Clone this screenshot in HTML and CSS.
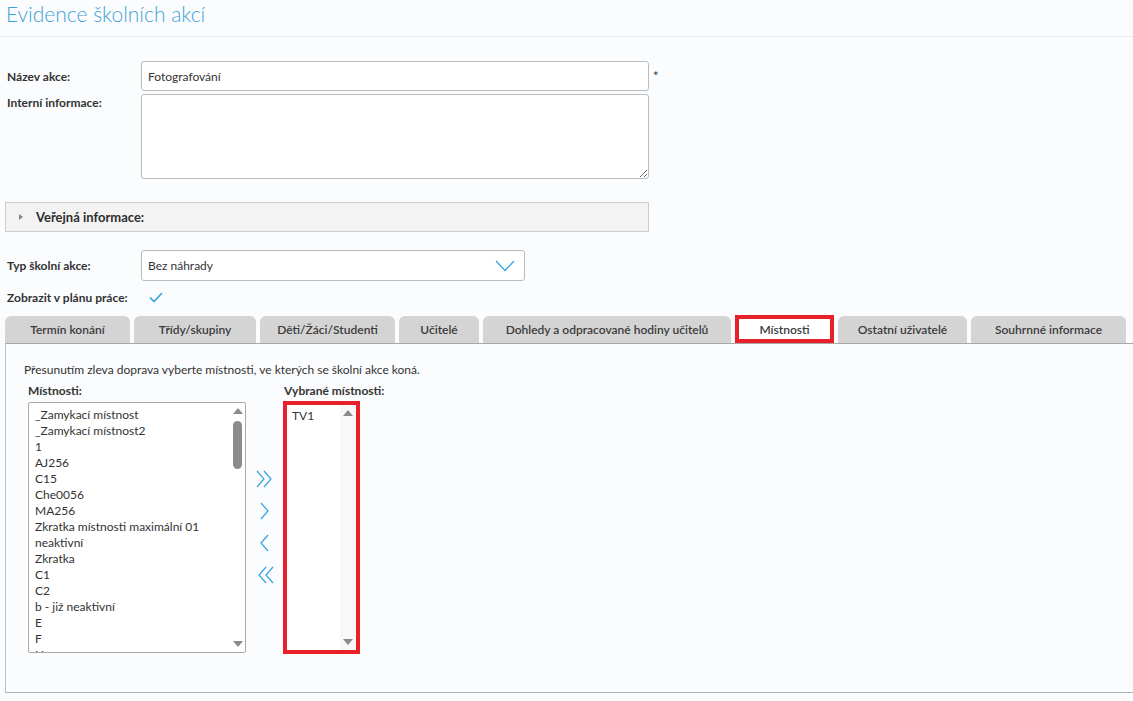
FILE: index.html
```html
<!DOCTYPE html>
<html lang="cs">
<head>
    <meta charset="UTF-8">
    <meta name="viewport" content="width=device-width, initial-scale=1.0">
    <title>Evidence školních akcí</title>
    <link rel="stylesheet" href="styles.css">
</head>
<body>
    <!-- Page header -->
    <header class="page-head">
        <h1>Evidence školních akcí</h1>
    </header>

    <!-- Basic event data -->
    <div class="form-grid">
        <label class="form-label" for="nazev">Název akce:</label>
        <input class="text-input" id="nazev" type="text" value="Fotografování">
        <span class="required">*</span>

        <label class="form-label top" for="interni">Interní informace:</label>
        <textarea class="text-area" id="interni"></textarea>
        <span></span>
    </div>

    <div class="collapse-head">
        <span class="collapse-arrow"></span>
        Veřejná informace:
    </div>

    <div class="form-grid second">
        <label class="form-label">Typ školní akce:</label>
        <div class="select-box">
            <span>Bez náhrady</span>
            <svg class="select-chevron" width="20" height="12" viewBox="0 0 20 12">
                <path d="M1 1 L10 10.5 L19 1" fill="none" stroke="#35a4df" stroke-width="1.3"/>
            </svg>
        </div>
        <span></span>

        <label class="form-label">Zobrazit v plánu práce:</label>
        <div class="check-cell">
            <svg width="14" height="11" viewBox="0 0 14 11">
                <path d="M1 5.5 L5 9.5 L13 1" fill="none" stroke="#35a4df" stroke-width="1.6"/>
            </svg>
        </div>
        <span></span>
    </div>

    <!-- Tabs -->
    <ul class="tabs">
        <li class="tab t1">Termín konání</li>
        <li class="tab t2">Třídy/skupiny</li>
        <li class="tab t3">Děti/Žáci/Studenti</li>
        <li class="tab t4">Učitelé</li>
        <li class="tab t5">Dohledy a odpracované hodiny učitelů</li>
        <li class="tab t6 is-active">Místnosti</li>
        <li class="tab t7">Ostatní uživatelé</li>
        <li class="tab t8">Souhrnné informace</li>
    </ul>

    <div class="tab-panel">
        <p class="hint">Přesunutím zleva doprava vyberte místnosti, ve kterých se školní akce koná.</p>

        <div class="picker">
            <div class="picker-col">
                <div class="picker-label">Místnosti:</div>
                <div class="listbox wide">
                    <ul class="options">
                        <li>_Zamykací místnost</li>
                        <li>_Zamykací místnost2</li>
                        <li>1</li>
                        <li>AJ256</li>
                        <li>C15</li>
                        <li>Che0056</li>
                        <li>MA256</li>
                        <li>Zkratka místnosti maximální 01</li>
                        <li>neaktivní</li>
                        <li>Zkratka</li>
                        <li>C1</li>
                        <li>C2</li>
                        <li>b - již neaktivní</li>
                        <li>E</li>
                        <li>F</li>
                        <li>H</li>
                    </ul>
                    <div class="scrollbar">
                        <span class="arrow-up"></span>
                        <span class="thumb"></span>
                        <span class="arrow-down"></span>
                    </div>
                </div>
            </div>

            <div class="move-buttons">
                <svg width="20" height="18" viewBox="0 0 20 18"><path d="M2 1 L9 9 L2 17 M9 1 L16 9 L9 17" fill="none" stroke="#35a4df" stroke-width="1.2"/></svg>
                <svg width="20" height="18" viewBox="0 0 20 18"><path d="M6 1 L13 9 L6 17" fill="none" stroke="#35a4df" stroke-width="1.2"/></svg>
                <svg width="20" height="18" viewBox="0 0 20 18"><path d="M13 1 L6 9 L13 17" fill="none" stroke="#35a4df" stroke-width="1.2"/></svg>
                <svg width="20" height="18" viewBox="0 0 20 18"><path d="M11 1 L4 9 L11 17 M18 1 L11 9 L18 17" fill="none" stroke="#35a4df" stroke-width="1.2"/></svg>
            </div>

            <div class="picker-col">
                <div class="picker-label">Vybrané místnosti:</div>
                <div class="listbox narrow marked">
                    <ul class="options">
                        <li>TV1</li>
                    </ul>
                    <div class="scrollbar light">
                        <span class="arrow-up"></span>
                        <span class="arrow-down"></span>
                    </div>
                </div>
            </div>
        </div>
    </div>
</body>
</html>
```

FILE: styles.css
```css
body {
    margin: 0;
    background: #fbfcfd;
    font-family: Lato, "Open Sans", sans-serif;
    font-size: 12px;
    color: #333;
}
.page-head {
    height: 36px;
    border-bottom: 1px solid #e4eaee;
    padding-left: 6px;
}
.page-head h1 {
    margin: 0;
    font-size: 21px;
    font-weight: 300;
    line-height: 28px;
    color: #3ea3d9;
}

/* label / field grid */
.form-grid {
    display: grid;
    grid-template-columns: 134px 508px auto;
    row-gap: 3px;
    padding: 24px 0 0 7px;
    align-items: center;
}
.form-grid.second {
    padding-top: 18px;
    row-gap: 6px;
}
.form-label {
    font-weight: 700;
    color: #333;
}
.form-label.top {
    align-self: start;
    padding-top: 1px;
}
.required {
    padding-left: 4px;
    align-self: start;
    padding-top: 7px;
    font-size: 13px;
}
.text-input,
.text-area,
.select-box {
    box-sizing: border-box;
    border: 1px solid #b9bcbe;
    border-radius: 3px;
    background: #fff;
    font-family: inherit;
    font-size: 12px;
    color: #333;
    width: 508px;
}
.text-input {
    height: 30px;
    padding: 0 6px;
}
.text-area {
    height: 85px;
    resize: vertical;
    margin: 0;
    display: block;
}
.select-box {
    width: 384px;
    height: 31px;
    padding: 0 6px;
    display: flex;
    align-items: center;
    justify-content: space-between;
}
.select-chevron {
    margin-right: 3px;
}
.check-cell {
    height: 20px;
    padding-left: 8px;
    display: flex;
    align-items: center;
}

.collapse-head {
    box-sizing: border-box;
    margin: 23px 0 0 5px;
    width: 644px;
    height: 30px;
    background: #f3f3f3;
    border: 1px solid #cdcdcd;
    display: flex;
    align-items: center;
    padding-left: 13px;
    font-size: 13px;
    font-weight: 700;
    color: #2d2d2d;
}
.collapse-arrow {
    width: 0;
    height: 0;
    border-top: 3px solid transparent;
    border-bottom: 3px solid transparent;
    border-left: 4px solid #888;
    margin-right: 13px;
}

/* tabs */
.tabs {
    list-style: none;
    margin: 9px 0 0 0;
    padding: 0 0 0 5px;
    display: flex;
    gap: 4px;
    height: 27px;
}
.tab {
    box-sizing: border-box;
    height: 27px;
    background: #d4d4d4;
    border-radius: 6px 6px 0 0;
    display: flex;
    align-items: center;
    justify-content: center;
    color: #3b3b3b;
    font-weight: 600;
}
.t1 { width: 125px; }
.t2 { width: 122px; }
.t3 { width: 135px; }
.t4 { width: 80px; }
.t5 { width: 248px; }
.t6 { width: 99px; }
.t7 { width: 129px; }
.t8 { width: 155px; }
.tab.is-active {
    background: #fff;
    border: 4px solid #e8202a;
    border-radius: 0;
    height: 28px;
    margin-top: -1px;
}
.tab-panel {
    box-sizing: border-box;
    margin-left: 5px;
    height: 350px;
    border-top: 1px solid #a8a8a8;
    border-left: 1px solid #b3c2c9;
    border-bottom: 1px solid #a9b8bf;
    padding: 18px 0 0 18px;
}
.hint {
    margin: 0 0 6px 0;
    line-height: 16px;
}

/* room picker */
.picker {
    display: flex;
    padding-left: 4px;
}
.picker-label {
    font-weight: 700;
    line-height: 14px;
    margin-bottom: 4px;
}
.listbox {
    position: relative;
    box-sizing: border-box;
    height: 251px;
    background: #fff;
    border: 1px solid #a9a9a9;
    border-radius: 2px;
    overflow: hidden;
    display: flex;
}
.listbox.wide {
    width: 218px;
}
.listbox.narrow {
    width: 77px;
}
.listbox.marked {
    border: 4px solid #e8202a;
    border-radius: 0;
    height: 253px;
    margin-left: -1px;
    margin-top: -1px;
}
.options {
    list-style: none;
    margin: 0;
    padding: 4px 0 0 6px;
    flex: 1;
    line-height: 16px;
    color: #333;
    white-space: nowrap;
}
.marked .options {
    padding: 3px 0 0 5px;
}
.scrollbar {
    width: 15px;
    position: relative;
    flex: none;
}
.scrollbar.light {
    background: #f7f8f8;
    width: 16px;
}
.arrow-up,
.arrow-down {
    position: absolute;
    left: 3px;
    width: 0;
    height: 0;
    border-left: 5px solid transparent;
    border-right: 5px solid transparent;
}
.arrow-up {
    top: 5px;
    border-bottom: 6px solid #8a8a8a;
}
.arrow-down {
    bottom: 5px;
    border-top: 6px solid #8a8a8a;
}
.thumb {
    position: absolute;
    left: 3px;
    top: 18px;
    width: 9px;
    height: 48px;
    border-radius: 5px;
    background: #8c8c8c;
}
.move-buttons {
    width: 38px;
    display: flex;
    flex-direction: column;
    align-items: center;
    gap: 14px;
    padding-top: 86px;
}
.move-buttons svg {
    display: block;
}
```
